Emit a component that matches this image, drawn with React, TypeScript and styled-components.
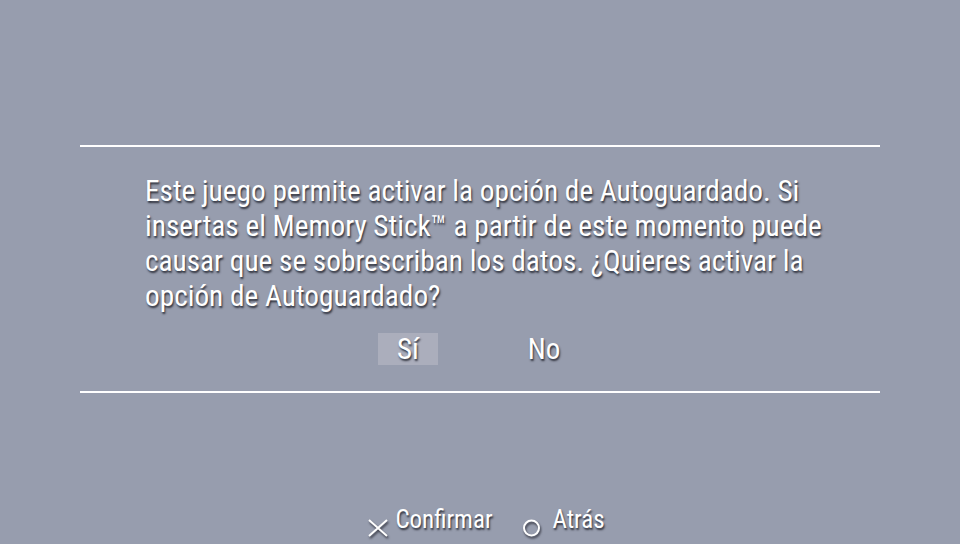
import React from 'react';
import styled, { createGlobalStyle } from 'styled-components';

const GlobalStyle = createGlobalStyle`
  html, body {
    margin: 0;
    padding: 0;
    background: #979dae;
  }
  body {
    font-family: "Roboto Condensed", Roboto, "Liberation Sans", sans-serif;
    color: #fff;
  }
`;

const Screen = styled.div`
  width: 960px;
  height: 544px;
  display: flex;
  flex-direction: column;
  align-items: center;
  overflow: hidden;
  text-shadow: 1px 2px 2px rgba(36, 38, 48, 0.9);
`;

const Dialog = styled.div`
  margin-top: 145px;
  width: 800px;
  height: 248px;
  box-sizing: border-box;
  border-top: 2px solid #fff;
  border-bottom: 2px solid #fff;
  display: flex;
  flex-direction: column;
  align-items: center;
`;

const Message = styled.p`
  align-self: flex-start;
  margin: 27px 0 0 65px;
  width: 700px;
  font-size: 29.3px;
  line-height: 35px;
`;

const Choices = styled.div`
  display: flex;
  gap: 76px;
  margin-top: 19px;
  padding-right: 8px;
`;

const Choice = styled.button<{ $selected?: boolean }>`
  width: 60px;
  height: 32px;
  border: none;
  padding: 0;
  font-family: inherit;
  font-size: 29px;
  line-height: 32px;
  color: #fff;
  text-shadow: inherit;
  background: ${p => (p.$selected ? '#abaebc' : 'transparent')};
  display: flex;
  justify-content: center;
  align-items: center;
`;

const Footer = styled.div`
  margin-top: 112px;
  display: flex;
  align-items: center;
  gap: 30px;
  padding-left: 12px;
`;

const Hint = styled.div`
  display: flex;
  align-items: center;
  gap: 6px;
  font-size: 25px;
  line-height: 30px;
`;

const HintIcon = styled.svg`
  filter: drop-shadow(1px 2px 1px rgba(36, 38, 48, 0.85));
  transform: translateY(8px);
`;

const CrossIcon = () => (
  <HintIcon width="22" height="18" viewBox="0 0 22 18">
    <path d="M2 1 L20 17 M20 1 L2 17" stroke="#fff" strokeWidth="2" fill="none" />
  </HintIcon>
);

const CircleIcon = () => (
  <HintIcon width="24" height="18" viewBox="0 0 24 18">
    <circle cx="8.5" cy="9" r="7.5" stroke="#fff" strokeWidth="2" fill="none" />
  </HintIcon>
);

export default function App() {
  return (
    <Screen>
      <GlobalStyle />
      <Dialog>
        <Message>
          Este juego permite activar la opción de Autoguardado. Si insertas el Memory Stick™ a partir
          de este momento puede causar que se sobrescriban los datos. ¿Quieres activar la opción de
          Autoguardado?
        </Message>
        <Choices>
          <Choice $selected>Sí</Choice>
          <Choice>No</Choice>
        </Choices>
      </Dialog>
      <Footer>
        <Hint>
          <CrossIcon />
          Confirmar
        </Hint>
        <Hint>
          <CircleIcon />
          Atrás
        </Hint>
      </Footer>
    </Screen>
  );
}
